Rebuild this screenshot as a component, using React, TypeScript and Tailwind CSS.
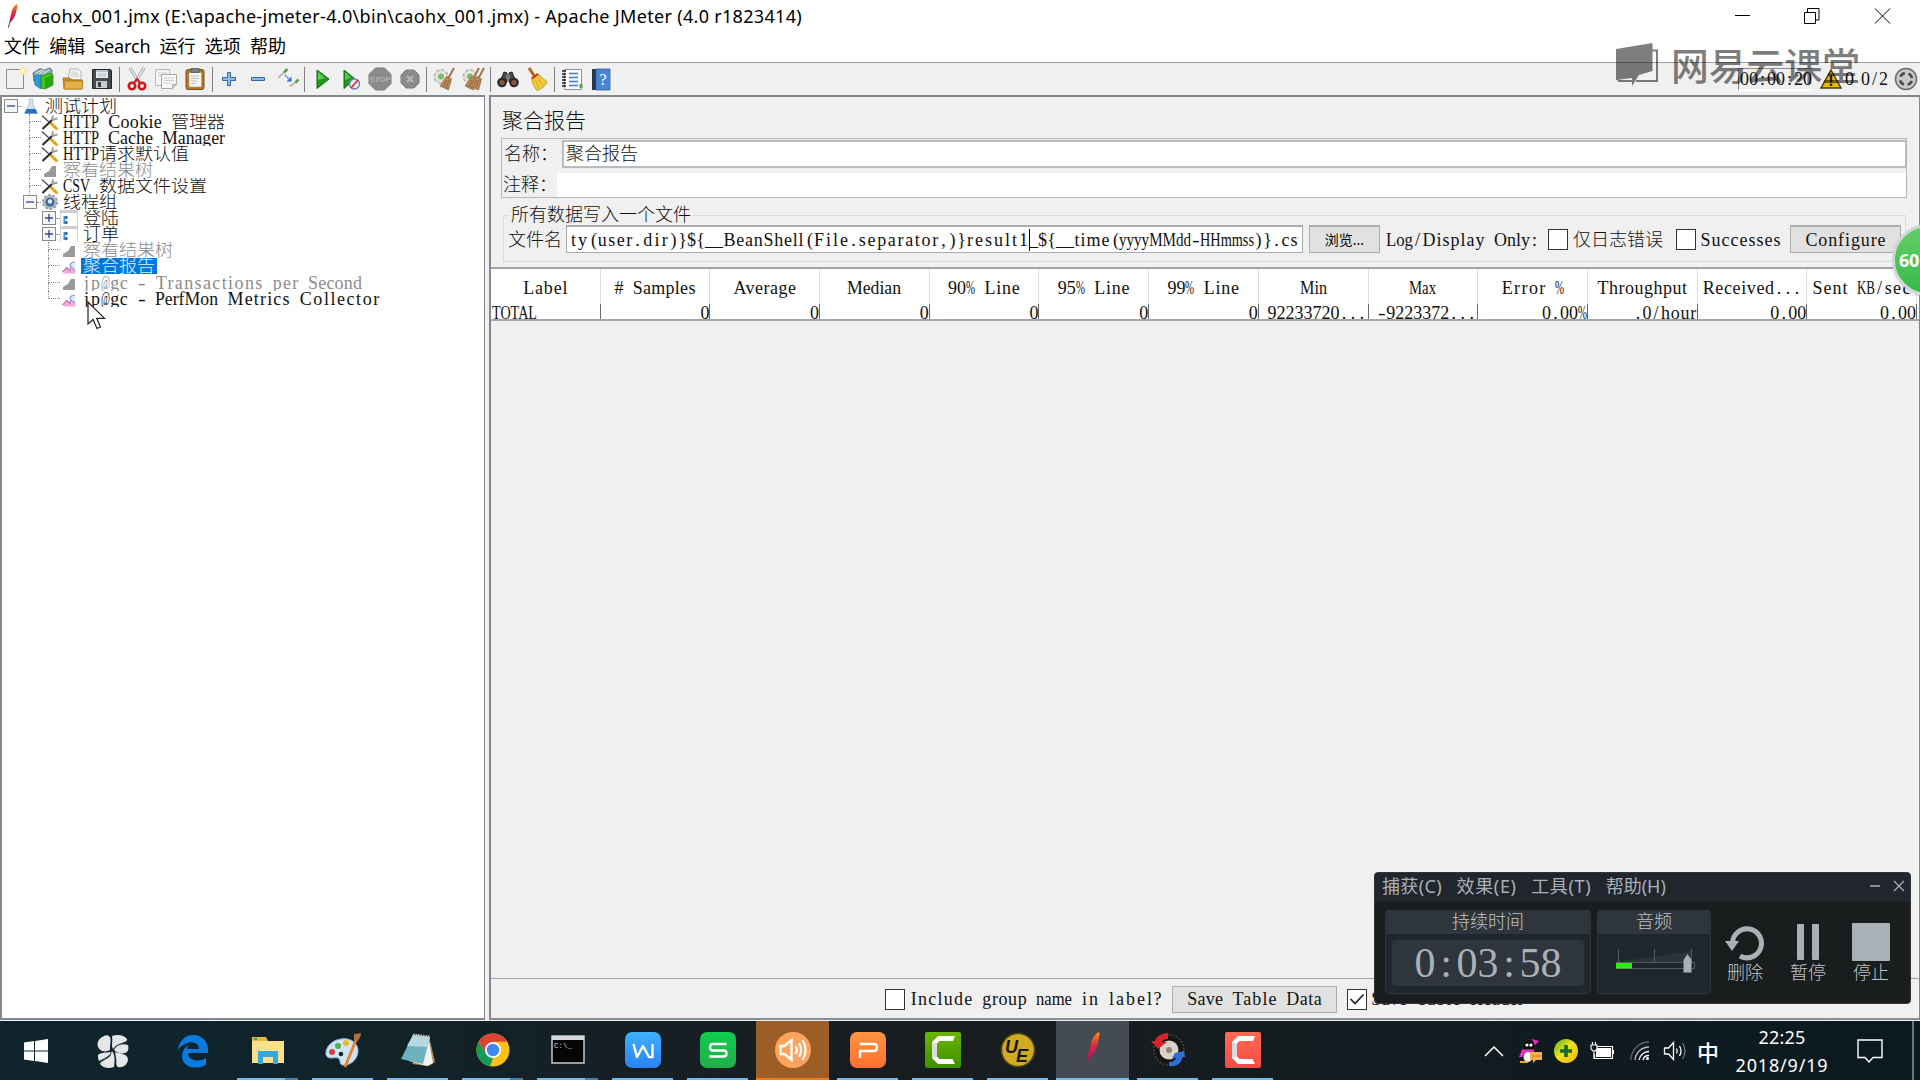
import { useLayoutEffect, useRef, useState, type ReactNode } from 'react';

/* Text whose letter spacing is tuned so that it fills a known width. */
function Fit({ w, className = '', children }: { w: number; className?: string; children: string }) {
  const ref = useRef<HTMLSpanElement>(null);
  const [ls, setLs] = useState(0);
  useLayoutEffect(() => {
    const el = ref.current;
    if (!el) return;
    el.style.letterSpacing = '0px';
    const natural = el.getBoundingClientRect().width;
    setLs((w - natural) / children.length);
    el.style.letterSpacing = `${(w - natural) / children.length}px`;
  }, [w, children]);
  return (
    <span ref={ref} className={`whitespace-pre ${className}`} style={{ letterSpacing: `${ls}px` }}>
      {children}
    </span>
  );
}

/* A latin word set on half-width cells: wide words are condensed, narrow ones are spaced out. */
function Word({ w, children }: { w: number; children: string }) {
  const ref = useRef<HTMLSpanElement>(null);
  const [fit, setFit] = useState({ scale: 1, ls: 0, pad: 0 });
  useLayoutEffect(() => {
    const el = ref.current;
    if (!el) return;
    el.style.letterSpacing = '0px';
    el.style.transform = 'none';
    const natural = el.getBoundingClientRect().width;
    let next = { scale: 1, ls: (w - natural) / children.length, pad: 0 };
    if (children === '-') next = { scale: (w * 0.85) / natural, ls: 0, pad: w * 0.08 };
    else if (natural > w) next = { scale: w / natural, ls: 0, pad: 0 };
    else if (children === '(') next = { scale: 1, ls: 0, pad: w - natural };
    else if (/^[:/#]$/.test(children)) next = { scale: 1, ls: 0, pad: (w - natural) / 2 };
    else next.pad = next.ls / 2;
    setFit(next);
    el.style.letterSpacing = `${next.ls}px`;
    el.style.transform = `scaleX(${next.scale})`;
  }, [w, children]);
  return (
    <span className="inline-block" style={{ width: w }}>
      <span
        ref={ref}
        className="inline-block origin-left"
        style={{ letterSpacing: `${fit.ls}px`, transform: `scaleX(${fit.scale})`, marginLeft: fit.pad, marginRight: -20 }}
      >
        {children}
      </span>
    </span>
  );
}

/* Bitmap-style duospaced text: latin glyphs take half of a CJK cell. */
function T({ children, u = 9, className = '' }: { children: string; u?: number; className?: string }) {
  const tokens = children.match(/[\u2e80-\uffef]+|[A-Za-z0-9]+| +|[^A-Za-z0-9 \u2e80-\uffef]/g) ?? [];
  return (
    <span
      className={`inline-block whitespace-pre font-['Liberation_Serif','Noto_Sans_CJK_SC',serif] text-[18px] font-light leading-[20px] [word-spacing:4.5px] ${className}`}
    >
      {tokens.map((t, i) =>
        /^[\u2e80-\uffef ]/.test(t) ? (
          <span key={i}>{t}</span>
        ) : (
          <Word key={i} w={u * t.length}>
            {t}
          </Word>
        ),
      )}
    </span>
  );
}

const UI = "font-['Noto_Sans','Noto_Sans_CJK_SC',sans-serif]";

function Feather({ className = '' }: { className?: string }) {
  return (
    <svg viewBox="0 0 12 28" className={className}>
      <defs>
        <linearGradient id="feather" x1="0" y1="0" x2="0" y2="1">
          <stop offset="0" stopColor="#f69923" />
          <stop offset=".35" stopColor="#e0303a" />
          <stop offset=".65" stopColor="#c2185b" />
          <stop offset="1" stopColor="#5b2a86" />
        </linearGradient>
      </defs>
      <path d="M11 0C8 1 5 5 4 11C3 15 2 18 2 20L0 27.500L1.300 27.500L2.600 22C6 19 9 14 10 8C11 4 11.500 2 11 0Z" fill="url(#feather)" />
    </svg>
  );
}

/* ---------- toolbar ---------- */
const S = ({ children }: { children: ReactNode }) => (
  <svg viewBox="0 0 24 24" className="h-6 w-6">
    {children}
  </svg>
);

const Broom = ({ x = 0, c = '#b98a56' }: { x?: number; c?: string }) => (
  <g transform={`translate(${x} 0)`}>
    <path d="M20 1L14.500 11" stroke="#9a7650" strokeWidth="2" />
    <path d="M12.500 9.500L17.500 12L14.500 23L6 19Z" fill={c} stroke="#8b6239" strokeWidth=".7" />
    <path d="M13 13L9 20M15 13L12 21" stroke="#80582e" strokeWidth=".7" />
  </g>
);
const Gear = () => (
  <g>
    <circle cx="9" cy="9.500" r="6.500" fill="#e4e4e0" stroke="#b3b3ad" strokeWidth="2" strokeDasharray="3 2" />
    <circle cx="9" cy="9.500" r="6" fill="#e6e6e2" stroke="#c4c4be" strokeWidth=".8" />
    <circle cx="9" cy="9.500" r="3" fill="#7fba67" />
  </g>
);

const toolGroups: ReactNode[][] = [
  [
    <S>
      <path d="M3.500 2.500h17v19h-17z" fill="#f1f1ef" stroke="#8d8d89" />
      <circle cx="20" cy="4" r="3.800" fill="#f7ee9a" />
      <circle cx="20" cy="4" r="1.600" fill="#fffde0" />
    </S>,
    <S>
      <path d="M1 6L8 1.500L12 3L18 1L20 3V9L12 12L2 14Z" fill="#8fa9b5" stroke="#4f6d7c" strokeWidth=".8" />
      <path d="M4 6l6-3M7 7l6-4M11 7l6-4" stroke="#e4edf1" />
      <path d="M1.500 9L9 8V22L3 18Z" fill="#2a9bd6" stroke="#1b75a9" strokeWidth=".7" />
      <path d="M9 9L18 6L21 8V18L13 22L9 21Z" fill="#3fc418" stroke="#24820b" strokeWidth=".7" />
      <path d="M13 11L21 8V18L13 22Z" fill="#2fa10c" />
    </S>,
    <S>
      <path d="M7 12L9 2H17L20 5V13Z" fill="#f7f7f7" stroke="#a5a5a5" strokeWidth=".8" />
      <path d="M10 5h6M10 7h8M9 9h9" stroke="#bdbdbd" strokeWidth=".8" />
      <path d="M2 11h7l2 2h10V22H3Z" fill="#c9902c" stroke="#a06c12" strokeWidth=".8" />
      <path d="M3 22L4 14H22L21 22Z" fill="#e6ae48" stroke="#b07b1a" strokeWidth=".8" />
    </S>,
    <S>
      <path d="M2.500 2.500h18l1 1v18h-19z" fill="#454a4e" stroke="#24272a" />
      <path d="M6 3h12v8H6z" fill="#e8eef3" />
      <path d="M6 3h12v2H6z" fill="#aec4d9" />
      <path d="M7.500 7h9M7.500 9h9" stroke="#a7b1ba" strokeWidth=".8" />
      <path d="M6 14h11v7H6z" fill="#c9cccf" />
      <path d="M8 15h3v5H8z" fill="#3c4043" />
    </S>,
  ],
  [
    <S>
      <path d="M5 1L14 15M19 1L10 15" stroke="#8c9196" strokeWidth="3" />
      <path d="M5 1L14 15M19 1L10 15" stroke="#e6e9eb" strokeWidth="1.600" />
      <circle cx="7" cy="19" r="3.200" fill="none" stroke="#cf1717" strokeWidth="2.600" />
      <circle cx="17" cy="19" r="3.200" fill="none" stroke="#cf1717" strokeWidth="2.600" />
      <path d="M9 16L12 12L15 16" fill="none" stroke="#cf1717" strokeWidth="2" />
    </S>,
    <S>
      <path d="M1.500 2.500h14v16h-14z" fill="#f4f4f3" stroke="#b6b6b3" />
      <path d="M7.500 7.500h15v10l-4 4h-11z" fill="#f7f7f6" stroke="#a7a7a4" />
      <path d="M22 17.500H18.500V21.500" fill="#ddd" stroke="#a7a7a4" />
      <path d="M4 6h9M4 8.500h3M10 11h10M10 13.500h10M10 16h7" stroke="#cbcbc8" />
    </S>,
    <S>
      <rect x="3" y="2.500" width="18" height="20" rx="2" fill="#b3772a" stroke="#7d4f14" />
      <path d="M6 5.500h12.500V20H6z" fill="#f6f6f4" stroke="#989890" strokeWidth=".7" />
      <path d="M8 1.500h8v4H8z" fill="#7b7d79" stroke="#4c4e4b" strokeWidth=".7" />
      <path d="M8 9h8M8 11.500h8M8 14h6M8 16.500h4" stroke="#b7b7b3" />
    </S>,
  ],
  [
    <S>
      <path d="M10.500 5.500h3v5h5v3h-5v5h-3v-5h-5v-3h5z" fill="#8db9e8" stroke="#3467a8" />
    </S>,
    <S>
      <path d="M5.500 10.500h13v3h-13z" fill="#8db9e8" stroke="#3467a8" />
    </S>,
    <S>
      <path d="M2.500 10.500L9 4.500" stroke="#b5bdae" strokeWidth="2" />
      <path d="M8 5.500L11.500 2" stroke="#5c9e4d" strokeWidth="2.500" />
      <path d="M13.500 19.500L20 15" stroke="#b5bdae" strokeWidth="2" />
      <path d="M19.500 15.500L22.500 12.500" stroke="#5c9e4d" strokeWidth="2.500" />
      <path d="M9 8L14 13" stroke="#3b78cf" strokeWidth="1.500" strokeDasharray="2 1" fill="none" />
      <path d="M15.500 9.500V14.500H10.500Z" fill="#2f6bd0" />
    </S>,
  ],
  [
    <S>
      <path d="M7 3L19 12L7 21.500Z" fill="#1f9a1f" stroke="#0e6b10" />
      <path d="M8 5L15 11L8 13Z" fill="#5cc85a" />
    </S>,
    <S>
      <path d="M5 3L16 12L5 21.500Z" fill="#1f9a1f" stroke="#0e6b10" />
      <path d="M6 5L12 10.500L6 13Z" fill="#5cc85a" />
      <circle cx="15.500" cy="17" r="5" fill="#e6eaf1" stroke="#6983b5" strokeWidth="1.400" />
      <path d="M12 21L19 13" stroke="#d83a36" strokeWidth="1.800" />
    </S>,
    <S>
      <path d="M7.500 1h9L23 7.500v9L16.500 23h-9L1 16.500v-9z" fill="#8b8b8b" stroke="#7a7a7a" />
      <text x="12" y="15.300" textAnchor="middle" fontSize="8" fontWeight="700" fill="#b0b0b0" fontFamily="Liberation Sans">
        STOP
      </text>
    </S>,
    <S>
      <path d="M8 3h8l5 5v8l-5 5H8l-5-5V8z" fill="#8b8b8b" stroke="#7a7a7a" />
      <path d="M9 9l6 6M15 9l-6 6" stroke="#b4b4b4" strokeWidth="2.400" />
    </S>,
  ],
  [
    <S>
      <Gear />
      <Broom x={2} />
    </S>,
    <S>
      <Gear />
      <Broom x={-2} />
      <Broom x={3} />
    </S>,
  ],
  [
    <S>
      <path d="M8 5l3 1v9H4zM16 5l-3 1v9h7z" fill="#4c4c4c" stroke="#1f1f1f" />
      <path d="M10 8h4v4h-4z" fill="#777" />
      <circle cx="6" cy="15.500" r="4.800" fill="#2c2c2c" />
      <circle cx="18" cy="15.500" r="4.800" fill="#2c2c2c" />
      <circle cx="6" cy="15.500" r="2.500" fill="#8a5a3c" />
      <circle cx="18" cy="15.500" r="2.500" fill="#8a5a3c" />
    </S>,
    <S>
      <path d="M4 1L10 10" stroke="#b3661c" strokeWidth="3" />
      <path d="M6.500 11L12.500 6.500L22 15C20 20 16 22 12 23.500C9 20 7 16 6.500 11Z" fill="#f2cc3a" stroke="#b98d12" strokeWidth=".8" />
      <path d="M7 11.500L13 7" stroke="#c8301e" strokeWidth="2" />
      <path d="M10 12l4 9M13 11l5 8" stroke="#c79a1d" strokeWidth=".8" />
    </S>,
  ],
  [
    <S>
      <path d="M4.500 2.500h17v20h-17z" fill="#fbfbfb" stroke="#8d9299" />
      <path d="M9 6.500h9M9 10.500h9M9 14.500h9M9 18.500h9" stroke="#3f7cc9" strokeWidth="1.500" />
      <path d="M2 4h4M2 7h4M2 10h4M2 13h4M2 16h4M2 19h4" stroke="#1f1f1f" strokeWidth="1.300" />
      <path d="M19.500 17h3v4h-3z" fill="#4da83d" />
    </S>,
    <S>
      <path d="M3 2h4v21H3z" fill="#27364d" />
      <path d="M7 2h14v21H7z" fill="#4a86d6" stroke="#2e5f9f" strokeWidth=".8" />
      <text x="14" y="18" textAnchor="middle" fontSize="16" fill="#fff" fontFamily="Liberation Serif">
        ?
      </text>
    </S>,
  ],
];

function Toolbar() {
  return (
    <div className="flex h-[33px] w-full shrink-0 items-center border-t border-[#a0a0a0] bg-[#f0f0f0]">
      {toolGroups.map((g, i) => (
        <div key={i} className="flex items-center">
          {i > 0 && (
            <div className="flex w-[5.600px] justify-center">
              <div className="h-[25px] w-px bg-[#808080]" />
            </div>
          )}
          {g.map((icon, j) => (
            <div key={j} className="flex w-[29.100px] justify-center">
              {icon}
            </div>
          ))}
        </div>
      ))}
      <div className="ml-auto flex items-center pr-[2px]">
        <div className="flex h-[23px] w-[75px] items-center border-b-2 border-l border-t border-b-white border-l-[#808080] border-t-[#909090] pl-px">
          <T>00:00:20</T>
        </div>
        <svg viewBox="0 0 22 20" className="ml-[7px] h-5 w-[22px]">
          <path d="M11 1L21 19H1Z" fill="#e6b800" stroke="#453c0c" strokeWidth="1.500" />
          <path d="M11 6v7M11 14.500v2.500" stroke="#222" strokeWidth="2.400" />
        </svg>
        <T className="ml-[3px]">0</T>
        <T className="ml-[7px]">0/2</T>
        <svg viewBox="0 0 24 24" className="ml-[6px] h-6 w-6">
          <circle cx="12" cy="12" r="10.500" fill="#c9c9c9" stroke="#6d6d6d" strokeWidth="1.500" />
          <circle cx="12" cy="12" r="6" fill="none" stroke="#4a4a4a" strokeWidth="2.600" strokeDasharray="5.600 3.825" strokeDashoffset="-1.900" />
        </svg>
      </div>
    </div>
  );
}

/* ---------- tree ---------- */
const TreeIcons: Record<string, ReactNode> = {
  flask: (
    <svg viewBox="0 0 18 16" className="h-4 w-[18px]">
      <path d="M7 1h4v5l4.500 9.500h-13L7 6z" fill="#cfe0f0" stroke="#a8bccd" strokeWidth=".7" />
      <path d="M4.500 11h9l2 4.500H2.500z" fill="#2470c2" />
    </svg>
  ),
  tools: (
    <svg viewBox="0 0 18 16" className="h-4 w-[18px]">
      <path d="M1 1.500L9 9" stroke="#555" strokeWidth="1.400" />
      <path d="M9 8.500L16.500 15.500" stroke="#e3a812" strokeWidth="3" />
      <path d="M1.500 15L11 6" stroke="#2e2e2e" strokeWidth="2.200" />
      <path d="M11 6L12 1.500M11 6L16.500 4.500" stroke="#9b9f9f" strokeWidth="2" fill="none" />
    </svg>
  ),
  grayChart: (
    <svg viewBox="0 0 18 16" className="h-4 w-[18px]">
      <path d="M3 15V12L8 9L11 4H15V15Z" fill="#9a9a9a" />
    </svg>
  ),
  pinkChart: (
    <svg viewBox="0 0 18 16" className="h-4 w-[18px]">
      <path d="M3 15.500L7 10L10 13L15 9V15.500Z" fill="#f6a6dd" />
      <path d="M2.500 14L7 9.500L10 12.500L12 8" stroke="#c76a9a" strokeWidth="1.200" fill="none" />
      <path d="M15 4C10 4 9 8 11 9L15 12" stroke="#7ea0d6" strokeWidth="1.200" fill="#dfe9f8" />
    </svg>
  ),
  gear: (
    <svg viewBox="0 0 18 16" className="h-4 w-[18px]">
      <circle cx="9" cy="8" r="7" fill="#b9bec4" stroke="#9a9fa4" strokeWidth="2" strokeDasharray="2.600 1.800" />
      <circle cx="9" cy="8" r="4.600" fill="#3f6599" />
      <circle cx="9" cy="7.500" r="2.300" fill="#dbe8f7" />
    </svg>
  ),
  ctrl: (
    <svg viewBox="0 0 18 16" className="h-4 w-[18px]">
      <path d="M.5 0V16M17.500 0V16" stroke="#d5d5d5" />
      <path d="M0 0h18v3H0z" fill="#cdcdcd" />
      <circle cx="6" cy="7.500" r="1.800" fill="#2f6fc0" />
      <circle cx="6" cy="12.500" r="1.800" fill="#2f6fc0" />
      <path d="M3.500 6h1.500v8H3.500z" fill="#4f86cc" />
    </svg>
  ),
};

type Row = { label: string; icon: string; level: number; box?: string; gray?: boolean; selected?: boolean };
const rows: Row[] = [
  { label: '测试计划', icon: 'flask', level: 0, box: '-' },
  { label: 'HTTP Cookie 管理器', icon: 'tools', level: 1 },
  { label: 'HTTP Cache Manager', icon: 'tools', level: 1 },
  { label: 'HTTP请求默认值', icon: 'tools', level: 1 },
  { label: '察看结果树', icon: 'grayChart', level: 1, gray: true },
  { label: 'CSV 数据文件设置', icon: 'tools', level: 1 },
  { label: '线程组', icon: 'gear', level: 1, box: '-' },
  { label: '登陆', icon: 'ctrl', level: 2, box: '+' },
  { label: '订单', icon: 'ctrl', level: 2, box: '+' },
  { label: '察看结果树', icon: 'grayChart', level: 2, gray: true },
  { label: '聚合报告', icon: 'pinkChart', level: 2, selected: true },
  { label: 'jp@gc - Transactions per Second', icon: 'grayChart', level: 2, gray: true },
  { label: 'jp@gc - PerfMon Metrics Collector', icon: 'pinkChart', level: 2 },
];
const indent = ['pl-px', 'pl-[20px]', 'pl-[39px]'];

function TreeRow({ r, last }: { r: Row; last: boolean }) {
  return (
    <div className={`flex h-4 w-full items-center ${indent[r.level]} ${r.label.startsWith('jp') ? 'mt-[0.5px]' : ''}`}>
      <div className="flex h-4 w-[19px] shrink-0 items-center">
        {r.box ? (
          <div className="flex w-full items-center">
            <svg viewBox="0 0 14 14" className="ml-px h-[14px] w-[14px] shrink-0">
              <rect x=".5" y=".5" width="13" height="13" fill="#f6f6f6" stroke="#8b8b8b" />
              <path d={r.box === '+' ? 'M3 7h8M7 3v8' : 'M3 7h8'} stroke="#33478c" strokeWidth="1.300" />
            </svg>
            <div className="w-1 border-t border-dotted border-[#8a8a8a]" />
          </div>
        ) : (
          <div className="ml-[7px] flex h-4 w-full flex-col">
            <div className="h-[8px] w-full border-b border-l border-dotted border-[#8a8a8a]" />
            {!last && <div className="h-[8px] border-l border-dotted border-[#8a8a8a]" />}
          </div>
        )}
      </div>
      <div className="flex w-[18px] shrink-0 justify-center">{TreeIcons[r.icon]}</div>
      <div
        className={`flex h-4 items-center overflow-hidden ${r.level === 1 ? 'ml-[2px] pl-[2px]' : 'ml-[3px] pl-[2px]'} ${
          r.selected ? 'bg-[#0078d7] pr-[2px] text-[#e4f1fc]' : r.gray ? 'text-[#8c8c8c]' : 'text-[#111]'
        }`}
      >
        <T>{r.label}</T>
      </div>
    </div>
  );
}

/* ---------- report panel ---------- */
const columns: [string, string][] = [
  ['Label', 'TOTAL'],
  ['# Samples', '0'],
  ['Average', '0'],
  ['Median', '0'],
  ['90% Line', '0'],
  ['95% Line', '0'],
  ['99% Line', '0'],
  ['Min', '92233720...'],
  ['Max', '-9223372...'],
  ['Error %', '0.00%'],
  ['Throughput', '.0/hour'],
  ['Received...', '0.00'],
  ['Sent KB/sec', '0.00'],
];

function Check({ on = false }: { on?: boolean }) {
  return (
    <div className="flex h-[21px] w-5 shrink-0 items-center justify-center border border-[#333] bg-white">
      {on && (
        <svg viewBox="0 0 16 16" className="h-4 w-4">
          <path d="M1.500 8L6 12.500L14.500 3.500" fill="none" stroke="#222" strokeWidth="1.700" />
        </svg>
      )}
    </div>
  );
}

function Report() {
  return (
    <div className="flex h-full w-[1431px] flex-col border-2 border-r border-[#828790] border-b-[#8a8d93] bg-[#f0f0f0]">
      <div className="flex h-[41px] items-center pl-[11px] pt-[6px]">
        <T u={10.5} className="text-[21px]">聚合报告</T>
      </div>
      <div className="ml-[10px] flex h-[60px] w-[1406px] flex-col border border-[#b4b8bc]">
        <div className="mt-px flex h-[28px] items-center pl-[2px]">
          <T className="w-[58px] shrink-0">名称：</T>
          <div className="flex h-7 flex-1 items-center border-2 border-r border-[#b9bcc0] bg-white pl-[2px]">
            <T>聚合报告</T>
          </div>
        </div>
        <div className="mt-[5px] flex h-6 items-center pl-px">
          <T className="w-[54px] shrink-0">注释：</T>
          <div className="h-6 flex-1 bg-white" />
        </div>
      </div>
      <fieldset className="ml-[12px] mt-[7px] flex h-[57px] w-[1403px] items-end border border-[#dcdcdc] px-[4px]">
        <legend className="ml-[2px] h-5 px-px leading-none">
          <T>所有数据写入一个文件</T>
        </legend>
        <div className="flex h-[31px] items-start">
          <T className="mt-[5px] w-[58px]">文件名</T>
          <div className="flex h-7 w-[737px] items-center overflow-hidden border border-t-2 border-[#a8acb0] bg-white pl-[3px]">
            <div className="flex w-[729px] items-center overflow-hidden">
              <T>{'ty(user.dir)}${__BeanShell(File.separator,)}result1'}</T>
              <div className="-mr-px h-[22px] w-px shrink-0 bg-black" />
              <T>{'_${__time(yyyyMMdd-HHmmss)}.csv'}</T>
            </div>
          </div>
          <div className={`ml-[6px] flex h-7 w-[71px] items-center justify-center border border-t-2 border-[#adadad] bg-[#e1e1e1] text-[14px] text-black ${UI}`}>
            浏览...
          </div>
          <T className="ml-[6px] mt-[5px]">Log/Display Only:</T>
          <div className="ml-[9px] mt-[4px]">
            <Check />
          </div>
          <T className="ml-[5px] mt-[5px]">仅日志错误</T>
          <div className="ml-[13px] mt-[4px]">
            <Check />
          </div>
          <T className="ml-[4px] mt-[5px]">Successes</T>
          <div className="ml-[9px] flex h-7 w-[111px] items-center justify-center border border-t-2 border-[#adadad] bg-[#e1e1e1]">
            <T>Configure</T>
          </div>
        </div>
      </fieldset>
      <div className="mt-[5px] h-[712px] w-full border-b border-t-2 border-[#a0a3a8]">
        <div className="flex h-[35px] w-full bg-white">
          {columns.map(([h]) => (
            <div key={h} className="flex w-[109.700px] items-center justify-center overflow-hidden border-r border-[#dedede] pt-[3px]">
              <T>{h}</T>
            </div>
          ))}
        </div>
        <div className="flex h-[17px] w-full border-b-2 border-[#a3a6aa] bg-white">
          {columns.map(([h, v], i) => (
            <div
              key={h}
              className={`flex w-[109.700px] items-center overflow-hidden border-r border-[#6a6a6a] pt-[2px] ${
                i === 0 ? 'justify-start pl-px' : i === 7 ? 'justify-end pr-px' : i === 8 ? 'justify-end pr-px' : 'justify-end'
              }`}
            >
              <T>{v}</T>
            </div>
          ))}
        </div>
      </div>
      <div className="flex flex-1 items-center pl-[394px] pt-px">
        <Check />
        <T className="ml-[5px]">Include group name in label?</T>
        <div className="ml-[10px] flex h-[27px] w-[165px] items-center justify-center border border-[#adadad] bg-[#e1e1e1]">
          <T>Save Table Data</T>
        </div>
        <div className="ml-[10px]">
          <Check on />
        </div>
        <T className="ml-[4px]">Save Table Header</T>
      </div>
    </div>
  );
}

/* ---------- recorder overlay ---------- */
function Recorder() {
  return (
    <div className="absolute left-[1374px] top-[872px] flex h-[132px] w-[537px] flex-col overflow-hidden rounded-[4px] border border-[#30363c] bg-[#191d1e] text-[#a9b0b6]">
      <div className={`flex h-[29px] shrink-0 items-center bg-[#21262e] pb-[3px] pl-[7px] text-[18px] leading-none ${UI}`}>
        {['捕获(C)', '效果(E)', '工具(T)', '帮助(H)'].map((m) => (
          <div key={m} className="w-[74.600px]">
            <Fit w={60}>{m}</Fit>
          </div>
        ))}
        <svg viewBox="0 0 36 12" className="ml-auto mr-[5px] h-3 w-9">
          <path d="M1 6h10M25 1l10 10M35 1L25 11" stroke="#a9b0b6" strokeWidth="1.300" />
        </svg>
      </div>
      <div className="flex flex-1 pl-[10px] pt-2">
        <div className="flex h-[84px] w-[206px] flex-col items-center rounded border border-[#2e353c] bg-[#20262e]">
          <div className="flex h-[23px] w-full items-center justify-center bg-[#2e353c] pb-px">
            <T className="text-[#c0c4c8]">持续时间</T>
          </div>
          <div className="mt-[6px] flex h-[46px] w-[192px] items-center justify-center rounded bg-[#2e353c]">
            <T u={21} className="text-[42px] leading-[46px]">0:03:58</T>
          </div>
        </div>
        <div className="ml-[6px] flex h-[84px] w-[114px] flex-col items-center rounded border border-[#2e353c] bg-[#20262e]">
          <div className="flex h-[23px] w-full items-center justify-center bg-[#2e353c] pb-px">
            <T className="text-[#c0c4c8]">音频</T>
          </div>
          <svg viewBox="0 0 82 28" className="mt-[14px] h-7 w-[82px]">
            <path d="M4 14L78 3V14Z" fill="#2b3239" />
            <path d="M5.500 1V14M41.500 1V14M78.500 1V14" stroke="#525a62" />
            <rect x="3.500" y="14.500" width="78" height="6" fill="#20262e" stroke="#525a62" />
            <rect x="3" y="15" width="16" height="5.500" fill="#2df00c" />
            <path d="M70.500 12L74.500 6L78.500 12V24.500H70.500Z" fill="#a9b0b6" />
          </svg>
        </div>
        <div className="ml-[9px] flex w-[50px] flex-col items-center">
          <svg viewBox="0 0 40 40" className="mt-[13px] h-10 w-10">
            <path d="M7.500 20A14.500 14.500 0 1 1 15 33" fill="none" stroke="#a9b0b6" strokeWidth="5" />
            <path d="M0 18H14L7 28Z" fill="#a9b0b6" />
          </svg>
          <T className="text-[#c0c4c8]">删除</T>
        </div>
        <div className="ml-[13px] flex w-[50px] flex-col items-center">
          <div className="mb-[2px] mt-[13px] flex h-[38px] w-[22px] items-center justify-between">
            <div className="h-9 w-[7px] rounded-[1px] bg-[#a9b0b6]" />
            <div className="h-9 w-[7px] rounded-[1px] bg-[#a9b0b6]" />
          </div>
          <T className="text-[#c0c4c8]">暂停</T>
        </div>
        <div className="ml-[13px] flex w-[50px] flex-col items-center">
          <div className="mb-[2px] mt-[13px] h-[38px] w-[38px] rounded-[1px] bg-[#a9b0b6]" />
          <T className="text-[#c0c4c8]">停止</T>
        </div>
      </div>
    </div>
  );
}

/* ---------- taskbar ---------- */
const I = ({ children }: { children: ReactNode }) => (
  <svg viewBox="0 0 36 36" className="h-9 w-9">
    {children}
  </svg>
);
const Tile = ({ a, b, d }: { a: string; b: string; d: string }) => (
  <I>
    <defs>
      <linearGradient id={`t${a.slice(1)}`} x1="0" y1="0" x2="0" y2="1">
        <stop offset="0" stopColor={a} />
        <stop offset="1" stopColor={b} />
      </linearGradient>
    </defs>
    <rect width="36" height="36" rx="7" fill={`url(#t${a.slice(1)})`} />
    <path d={d} fill="none" stroke="#fff" strokeWidth="2.400" strokeLinejoin="round" />
  </I>
);
const Cam = ({ a, b }: { a: string; b: string }) => (
  <I>
    <defs>
      <linearGradient id={`c${a.slice(1)}`} x1="0" y1="0" x2="0" y2="1">
        <stop offset="0" stopColor={a} />
        <stop offset="1" stopColor={b} />
      </linearGradient>
    </defs>
    <rect width="36" height="36" rx="2" fill={`url(#c${a.slice(1)})`} />
    <path d="M30 4H13L7 10V26L13 32H30L27.500 27H14.500L12 24.500V11.500L14.500 9H28Z" fill="#fff" />
    <path d="M7 10L12 11.500V24.500L7 26Z" fill="#dcdcdc" />
  </I>
);

type Task = { icon: ReactNode; w?: string; line?: string; bg?: string; split?: boolean };
const tasks: Task[] = [
  {
    w: 'w-[72px]',
    icon: (
      <I>
        <path d="M6 9.500L16 8V17.500H6ZM17 7.900L30 6V17.500H17ZM6 18.500H16V28L6 26.500ZM17 18.500H30V30L17 28.100Z" fill="#fff" />
      </I>
    ),
  },
  {
    w: 'w-[83px] pr-[2px]',
    icon: (
      <I>
        <g fill="#e4e6e8">
          <path d="M9 3C12 1.500 15 2.500 15.500 6C16 10 14.500 13 15 17C10 20 3.500 18 2.500 12C2.500 8 5 4.500 9 3Z" />
          <path d="M17 3C22 1 29 1.500 32 6C32.500 8 30 9 27 10C23 11 20 13 18 16C16 12 18 8 17 3Z" />
          <path d="M19 17C21 12 28 10 33 12C34 16 33 19 30 20C26 21 22 20 19 17Z" />
          <path d="M20 19C25 21 33 20 33 27C32 32 28 35 23 34C20 32 22 28 21 25Z" />
          <path d="M17 18C20 22 20 27 19 34C14 36 8 35 5 31C6 28 10 27 13 25C16 23 16 21 17 18Z" />
          <path d="M3 22C6 19 11 20 16 19C15 23 10 25 4 28C3 26 3 24 3 22Z" />
        </g>
      </I>
    ),
  },
  {
    icon: (
      <I>
        <path
          d="M3 17C4 8 10 2 18 2C28 2 34 9 33 20H13C13 27 23 30 31 25V32C22 37 8 35 7 24C7 18 10 14 14 12C12 14 12 15 12 16H24C24 7 10 7 3 17Z"
          fill="#0a7bdc"
        />
      </I>
    ),
  },
  {
    line: '#76b9ed',
    split: true,
    icon: (
      <I>
        <path d="M2 5h14l2 4H2z" fill="#e9b93e" />
        <path d="M2 9h32v22H2z" fill="#fbe08a" />
        <path d="M4 6h3v2H4z" fill="#3aa35a" />
        <path d="M8 19h20v13h-5v-7H13v7H8z" fill="#35a9e0" />
      </I>
    ),
  },
  {
    line: '#76b9ed',
    icon: (
      <I>
        <path d="M16 7C26 5 34 12 33 20C32 29 24 34 17 33C14 32 16 27 13 26C9 25 3 28 1 23C0 15 7 8 16 7Z" fill="#cfe3f3" stroke="#8cb3d2" />
        <circle cx="7" cy="20" r="3" fill="#dd3c34" />
        <circle cx="13" cy="14" r="3" fill="#56b043" />
        <circle cx="21" cy="11" r="3" fill="#f0b929" />
        <circle cx="16" cy="22" r="2.300" fill="#15252c" />
        <path d="M31 8L20 35" stroke="#e2822a" strokeWidth="2.800" />
        <path d="M29 2L37 1L33 9L29 8Z" fill="#ad6e3b" />
      </I>
    ),
  },
  {
    line: '#76b9ed',
    icon: (
      <I>
        <path d="M29 4L35 30L29 34L12 32Z" fill="#b78a4a" />
        <path d="M28 4L33 31L27 34L9 29Z" fill="#eef4f5" />
        <path d="M13 3L30 5L23 32L1 27Z" fill="#6fb2bf" />
        <path d="M13 3L30 5L27 15L7 14Z" fill="#b4d9df" />
        <path d="M13 3L30 5" stroke="#c8c8c8" strokeWidth="3" strokeDasharray="1.500 1" />
      </I>
    ),
  },
  {
    line: '#76b9ed',
    split: true,
    icon: (
      <I>
        <circle cx="18" cy="18" r="16.500" fill="#fbc116" />
        <path d="M3.700 9.800A16.500 16.500 0 0 1 32.300 9.800H18L11 22Z" fill="#dc4437" />
        <path d="M3.700 9.800L11 22L18 26L15 34.200A16.500 16.500 0 0 1 3.700 9.800Z" fill="#109d58" />
        <circle cx="18" cy="18" r="8" fill="#fff" />
        <circle cx="18" cy="18" r="6.200" fill="#4285f4" />
      </I>
    ),
  },
  {
    line: '#76b9ed',
    split: true,
    icon: (
      <I>
        <rect x="2" y="4" width="32" height="27" fill="#050505" stroke="#c5c8ca" strokeWidth="1.500" />
        <path d="M2 4h32v4H2z" fill="#d6d9db" />
        <text x="4" y="16" fontSize="7.500" fill="#ddd" fontFamily="Liberation Mono">
          C:\_
        </text>
      </I>
    ),
  },
  { line: '#76b9ed', icon: <Tile a="#3fb0ff" b="#2a83f0" d="M8.500 12L12 25L18 14L24 25H27.500V12" /> },
  { line: '#76b9ed', icon: <Tile a="#0fce4e" b="#22ad4a" d="M26.500 12H13Q10 12 10 15.200T13 18.500H23.500Q26.500 18.500 26.500 21.500T23.500 24.500H9.500" /> },
  {
    line: '#ff7a0a',
    bg: 'bg-[#9d5d26]',
    icon: (
      <I>
        <circle cx="18" cy="18" r="18" fill="#ffa35c" />
        <path d="M5.500 14h4l7-6v20l-7-6h-4z" fill="none" stroke="#fff" strokeWidth="2.400" />
        <path d="M20.500 14Q23 18 20.500 22M24 11Q28 18 24 25M27.500 8Q33.500 18 27.500 28" fill="none" stroke="#fff" strokeWidth="2.200" />
      </I>
    ),
  },
  { line: '#76b9ed', icon: <Tile a="#ff9440" b="#ff7030" d="M10 12H24Q27 12 27 15.500T24 19H10V26" /> },
  { line: '#76b9ed', icon: <Cam a="#6cb500" b="#3c8f00" /> },
  {
    line: '#76b9ed',
    icon: (
      <I>
        <circle cx="18" cy="18" r="16.500" fill="#d0ab22" stroke="#54490f" strokeWidth="1.500" />
        <g fill="#17150c" fontFamily="Liberation Sans" fontWeight="700" fontStyle="italic">
          <text x="5" y="21" fontSize="18">
            U
          </text>
          <text x="16" y="30" fontSize="18">
            E
          </text>
        </g>
      </I>
    ),
  },
  { line: '#76b9ed', bg: 'bg-[#454b53]', icon: <Feather className="h-[35px] w-[18px]" /> },
  {
    line: '#76b9ed',
    icon: (
      <I>
        <circle cx="19" cy="18" r="15" fill="#131313" stroke="#3c3c3c" strokeWidth="2" strokeDasharray="2 1.500" />
        <circle cx="19" cy="18" r="9.500" fill="#d8d2c8" />
        <circle cx="19" cy="18" r="3" fill="#8b877f" />
        <path d="M18 1C11 1 6 5 5 9H1L8 17L17 10H12C13 8 15 7 18 7Z" fill="#d8232a" />
        <path d="M19 34C27 35 32 31 32 25H35L34 19L25 21L22 26H26C25 28 23 30 19 30Z" fill="#2e6fd8" />
      </I>
    ),
  },
  { line: '#76b9ed', icon: <Cam a="#ff6a55" b="#f84a45" /> },
];

function Taskbar() {
  return (
    <div className="flex h-[59px] w-full shrink-0 bg-gradient-to-r from-[#0f242c] via-[#181c1f] to-[#0a1a21] from-10%">
      {tasks.map((t, i) => (
        <div key={i} className={`flex h-full shrink-0 justify-center ${t.w ?? 'w-[75px]'}`}>
          <div className={`relative flex h-full w-[73px] flex-col items-center ${t.bg ?? ''}`}>
            <div className="flex flex-1 items-center">{t.icon}</div>
            {t.line && (
              <div className={`flex h-[2px] ${t.bg ? 'w-full' : 'w-[61px]'}`} style={{ backgroundColor: t.line }}>
                {t.split && <div className="ml-auto h-full w-[13px] bg-[#4d7ea4]" />}
              </div>
            )}
          </div>
        </div>
      ))}
      <div className="ml-auto flex h-full items-center text-white">
        <svg viewBox="0 0 20 12" className="h-3 w-5">
          <path d="M1 11L10 2L19 11" fill="none" stroke="#fff" strokeWidth="1.500" />
        </svg>
        <svg viewBox="0 0 24 24" className="ml-[14px] h-6 w-6">
          <ellipse cx="11" cy="7" rx="6.500" ry="6.500" fill="#111" stroke="#3d3d3d" strokeWidth=".5" />
          <circle cx="9" cy="6" r="1.600" fill="#fff" />
          <circle cx="13" cy="6" r="1.600" fill="#fff" />
          <path d="M14 0L21 2L17 6Z" fill="#f22fc4" />
          <path d="M2 13Q11 8 17 12V23H3Z" fill="#191919" />
          <ellipse cx="10" cy="18" rx="4.500" ry="5" fill="#fff" />
          <path d="M4 10.500H16V13H8L4 18H1Z" fill="#f22fc4" />
          <path d="M2 22h8v2H2z" fill="#f2a52c" />
          <path d="M12 13h12v8h-6l-3 3v-3h-3z" fill="#f3b04a" />
          <path d="M14.500 17h1.500M17.500 17h1.500M20.500 17h1.500" stroke="#7c4c08" />
        </svg>
        <svg viewBox="0 0 24 24" className="ml-3 h-6 w-6">
          <defs>
            <linearGradient id="shield" x1="0" y1="0" x2="1" y2="1">
              <stop offset="0" stopColor="#4fae21" />
              <stop offset=".45" stopColor="#f0e21a" />
              <stop offset="1" stopColor="#f4b50c" />
            </linearGradient>
          </defs>
          <circle cx="12" cy="12" r="12" fill="url(#shield)" />
          <path d="M12 6v12M6 12h12" stroke="#156d2a" strokeWidth="3.600" />
        </svg>
        <svg viewBox="0 0 24 18" className="ml-3 h-[18px] w-6">
          <path d="M6 6h15v9H6z" fill="#fff" />
          <path d="M5 4.500h17.500v12H4.500V12M23.500 8v4" fill="none" stroke="#fff" strokeWidth="1.200" />
          <path d="M1 3h6v4L5 9H3L1 7zM2.500 0v3M5.500 0v3M4 9v8" fill="#10191d" stroke="#fff" strokeWidth="1.100" />
        </svg>
        <svg viewBox="0 0 20 20" className="ml-4 h-5 w-5">
          <g fill="none" strokeWidth="1.300">
            <path d="M1 19A18 18 0 0 1 19 1" stroke="#5c666b" />
            <path d="M5 19A14 14 0 0 1 19 6" stroke="#b9bec0" />
            <path d="M9 19A10 10 0 0 1 19 10.500" stroke="#fff" />
            <path d="M13 19A6 6 0 0 1 19 14.500" stroke="#fff" />
          </g>
          <circle cx="17.500" cy="17.500" r="1.500" fill="#fff" />
        </svg>
        <svg viewBox="0 0 24 20" className="ml-[13px] h-5 w-6">
          <path d="M1.500 7h4l5-5.500v17L5.500 13h-4z" fill="none" stroke="#fff" strokeWidth="1.300" />
          <path d="M13.500 7.500Q15 10 13.500 12.500M16.500 5Q19.500 10 16.500 15" fill="none" stroke="#fff" strokeWidth="1.300" />
          <path d="M19.500 2Q24.500 10 19.500 18" fill="none" stroke="#69737a" strokeWidth="1.300" />
        </svg>
        <div className="ml-[10px] w-[22px] text-center font-['Noto_Sans_CJK_SC',sans-serif] text-[22px] font-medium leading-none">中</div>
        <div className={`ml-[16px] flex w-[94px] flex-col items-center text-[18px] leading-7 ${UI}`}>
          <Fit w={47}>22:25</Fit>
          <Fit w={93}>2018/9/19</Fit>
        </div>
        <svg viewBox="0 0 26 26" className="ml-[28px] h-[26px] w-[26px]">
          <path d="M1 2H25V19.500H16L12 24L8 19.500H1Z" fill="none" stroke="#fff" strokeWidth="1.400" />
        </svg>
        <div className="ml-[29px] mr-[6px] h-[59px] w-[2px] bg-[#6b767b]" />
      </div>
    </div>
  );
}

const menus: [string, number][] = [
  ['文件', 36],
  ['编辑', 36],
  ['Search', 56],
  ['运行', 36],
  ['选项', 36],
  ['帮助', 36],
];

export default function App() {
  return (
    <div className="relative flex h-[1080px] w-[1920px] flex-col overflow-hidden bg-white text-[#111]">
      <div className="flex h-[32px] shrink-0 items-center pl-[5px]">
        <Feather className="h-[24px] w-[16px]" />
        <div className={`ml-[10px] text-[18px] leading-none text-black ${UI}`}>
          <Fit w={771}>{'caohx_001.jmx (E:\\apache-jmeter-4.0\\bin\\caohx_001.jmx) - Apache JMeter (4.0 r1823414)'}</Fit>
        </div>
        <svg viewBox="0 0 156 16" className="ml-auto mr-[29px] h-4 w-[156px]">
          <path d="M0 7.500H15" stroke="#000" />
          <path d="M69.500 4.500h11v11h-11zM72.500 4V.5h11.500v11.500H81" fill="none" stroke="#000" />
          <path d="M140 .5L155 15.500M155 .5L140 15.500" stroke="#000" />
        </svg>
      </div>
      <div className={`flex h-[30px] shrink-0 items-center gap-[9.200px] pl-1 pb-[2px] text-[18px] leading-none text-black ${UI}`}>
        {menus.map(([m, w]) => (
          <Fit key={m} w={w}>
            {m}
          </Fit>
        ))}
      </div>
      <Toolbar />
      <div className="flex h-[926px] shrink-0 justify-between bg-[#f0f0f0] pb-px">
        <div className="flex w-[485px] flex-col border-2 border-r border-[#828790] bg-white pb-1 pt-px">
          {rows.map((r, i) => (
            <TreeRow key={i} r={r} last={i === 12} />
          ))}
        </div>
        <Report />
      </div>
      <Taskbar />

      <svg viewBox="0 0 20 30" className="absolute left-[87px] top-[301px] h-[30px] w-5">
        <path d="M1 1V23L6 18.500L10 27.500L13.500 26L9.700 17.300H17.500Z" fill="#fff" stroke="#222" strokeWidth="1.200" />
      </svg>

      <div className="absolute left-[1616px] top-[42px] flex items-center opacity-50">
        <svg viewBox="0 0 42 44" className="h-11 w-[42px]">
          <path d="M0 7L36.500 1V29L23 33L16 44V36L0 38Z" fill="#000" />
          <path d="M36 8.500H41V39H20M16 39H3L1 36" fill="none" stroke="#000" strokeWidth="2" />
        </svg>
        <div className="ml-[13px] font-['Noto_Sans_CJK_SC',sans-serif] text-[37.800px] font-medium leading-[42px] text-black">网易云课堂</div>
      </div>

      <div className="absolute left-[1892px] top-[224px] h-[72px] w-[28px] overflow-hidden">
        <div className="flex h-[72px] w-[72px] items-center rounded-full border-[3px] border-[#d2d6d2] bg-gradient-to-b from-[#63cf6a] to-[#34b94a] pl-[4px] text-[18px] font-bold text-white shadow-md">
          <Fit w={20} className="font-['Noto_Sans',sans-serif]">60</Fit>
        </div>
      </div>

      <Recorder />
    </div>
  );
}
